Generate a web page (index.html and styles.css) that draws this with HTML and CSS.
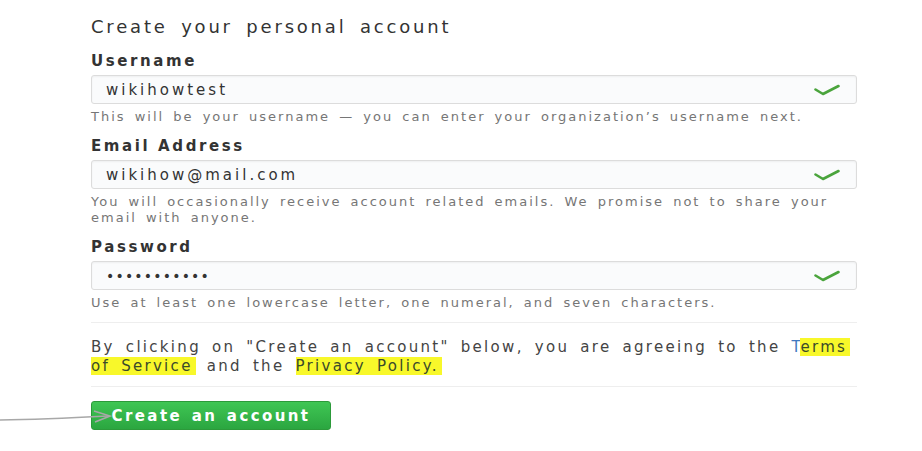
FILE: index.html
```html
<!DOCTYPE html>
<html lang="en">
<head>
<meta charset="utf-8">
<title>Create your personal account</title>
<link rel="stylesheet" href="styles.css">
</head>
<body>
<main class="signup">
  <h1 class="title">Create your personal account</h1>

  <div class="field">
    <label class="label">Username</label>
    <div class="input"><span class="value">wikihowtest</span>
      <svg class="check" viewBox="0 0 26 12" width="26" height="12"><path d="M1.5 5.5 L9 10 L24.5 2" fill="none" stroke="#4aa43c" stroke-width="2.6" stroke-linecap="round" stroke-linejoin="round"/></svg>
    </div>
    <p class="hint">This will be your username — you can enter your organization’s username next.</p>
  </div>

  <div class="field">
    <label class="label">Email Address</label>
    <div class="input"><span class="value">wikihow@mail.com</span>
      <svg class="check" viewBox="0 0 26 12" width="26" height="12"><path d="M1.5 5.5 L9 10 L24.5 2" fill="none" stroke="#4aa43c" stroke-width="2.6" stroke-linecap="round" stroke-linejoin="round"/></svg>
    </div>
    <p class="hint">You will occasionally receive account related emails. We promise not to share your email with anyone.</p>
  </div>

  <div class="field">
    <label class="label">Password</label>
    <div class="input"><span class="value dots">•••••••••••</span>
      <svg class="check" viewBox="0 0 26 12" width="26" height="12"><path d="M1.5 5.5 L9 10 L24.5 2" fill="none" stroke="#4aa43c" stroke-width="2.6" stroke-linecap="round" stroke-linejoin="round"/></svg>
    </div>
    <p class="hint hint-last">Use at least one lowercase letter, one numeral, and seven characters.</p>
  </div>

  <hr class="rule">
  <p class="terms">By clicking on "Create an account" below, you are agreeing to the <span class="link">T</span><mark class="hl">erms</mark> <mark class="hl">of Service</mark> and the <mark class="hl">Privacy Policy.</mark></p>
  <hr class="rule">

  <div class="actions">
    <button class="btn">Create an account</button>
    <svg class="arrow" viewBox="0 0 115 20" width="115" height="20"><path d="M0 11 C40 10.5 70 9 108 7" fill="none" stroke="#a8a8a8" stroke-width="1.6"/><path d="M94 2 L110 7 L95 13" fill="none" stroke="#a8a8a8" stroke-width="1.6"/></svg>
  </div>
</main>
</body>
</html>
```

FILE: styles.css
```css
html, body {
  margin: 0;
  padding: 0;
  background: #ffffff;
}
body {
  font-family: "DejaVu Sans", "Open Sans", sans-serif;
  color: #333333;
}
.signup {
  width: 766px;
  margin-left: 91px;
  padding-top: 16px;
}
.title {
  margin: 0 0 14px;
  font-size: 18px;
  font-weight: normal;
  line-height: 22px;
  letter-spacing: 2.8px;
  word-spacing: 5px;
  color: #333;
}
.field {
  display: flex;
  flex-direction: column;
}
.label {
  font-size: 15px;
  font-weight: bold;
  line-height: 18px;
  letter-spacing: 2.6px;
  margin-bottom: 5px;
  color: #333;
}
.input {
  height: 27px;
  border: 1px solid #dcdcdc;
  border-radius: 3px;
  background: #fafbfc;
  display: flex;
  align-items: center;
  justify-content: space-between;
  padding: 0 16px 0 14px;
  box-shadow: inset 0 1px 2px rgba(0,0,0,0.05);
}
.value {
  font-size: 15px;
  letter-spacing: 3px;
  color: #333;
}
.dots {
  letter-spacing: 1.2px;
  font-size: 14px;
}
.hint {
  margin: 5px 0 12px;
  font-size: 13px;
  line-height: 16px;
  letter-spacing: 2px;
  word-spacing: 3px;
  color: #767676;
}
.hint-last {
  margin-bottom: 11px;
}
.rule {
  margin: 0;
  border: 0;
  border-top: 1px solid #eeeeee;
  height: 0;
}
.terms {
  margin: 15px 0 10px;
  font-size: 15px;
  line-height: 19px;
  letter-spacing: 2.3px;
  word-spacing: 4px;
  color: #444;
}
.link {
  color: #4078c0;
}
.hl {
  background: #f8f82a;
  color: #3a4a2a;
  padding: 0 3px 0 0;
}
.actions {
  position: relative;
  margin-top: 14px;
}
.btn {
  height: 29px;
  width: 240px;
  border: 1px solid #2c9a3a;
  border-radius: 3px;
  background: linear-gradient(#3fc654, #2ba640);
  color: #ffffff;
  font-family: "DejaVu Sans", sans-serif;
  font-size: 15px;
  font-weight: bold;
  letter-spacing: 2.4px;
  word-spacing: 2px;
  padding: 0;
}
.arrow {
  position: absolute;
  left: -91px;
  top: 8px;
}
```
